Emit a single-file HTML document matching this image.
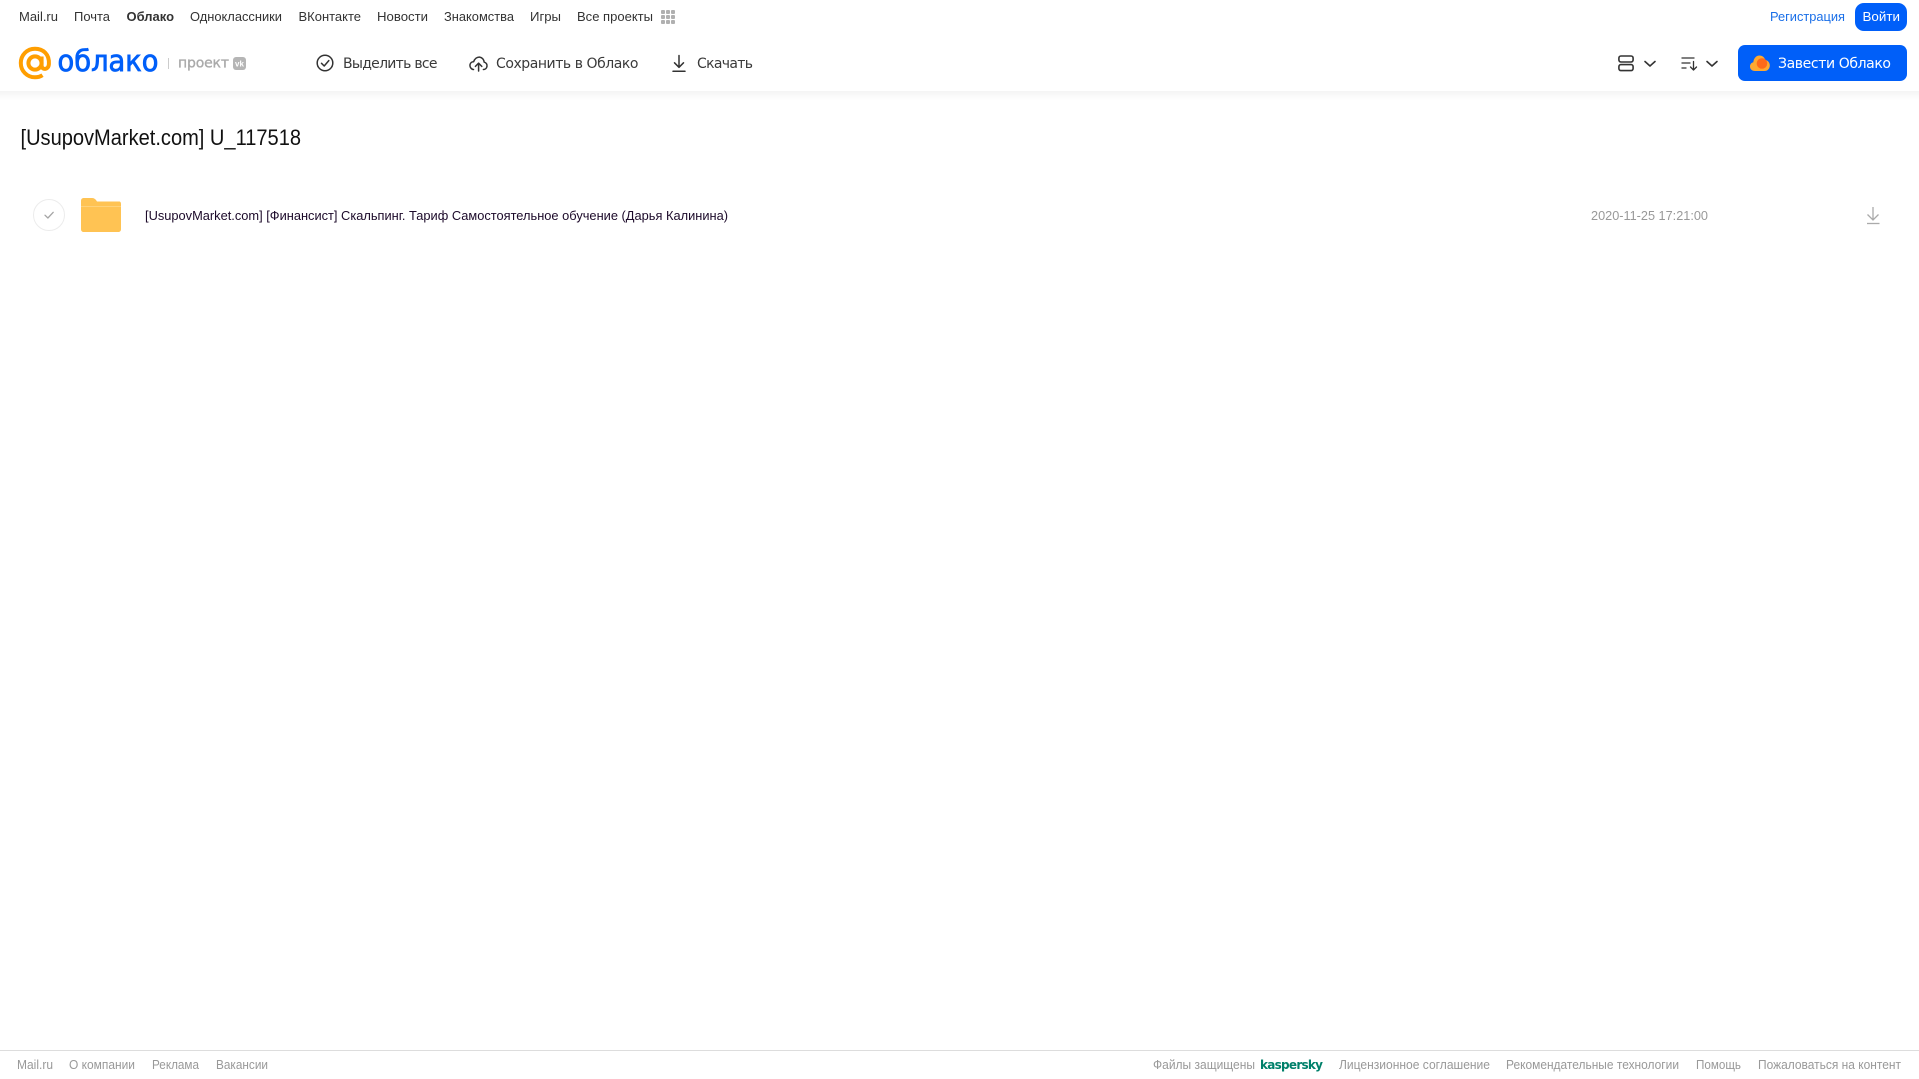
<!DOCTYPE html>
<html lang="ru">
<head>
<meta charset="utf-8">
<title>[UsupovMarket.com] U_117518</title>
<style>
html,body{margin:0;padding:0;width:1919px;height:1079px;overflow:hidden;background:#fff}
svg{display:block}
text{font-family:"Liberation Sans",sans-serif;white-space:pre}
.n{font-size:13px;fill:#333}
.t{font-family:"DejaVu Sans",sans-serif;font-size:14px;fill:#3a3a3a}
.f{font-size:12.5px;fill:#999}
</style>
</head>
<body>
<svg width="1919" height="1079" viewBox="0 0 1919 1079" xmlns="http://www.w3.org/2000/svg">
<defs>
<linearGradient id="sh" x1="0" y1="0" x2="0" y2="1"><stop offset="0" stop-color="#f4f4f4"/><stop offset="1" stop-color="#fff"/></linearGradient>
</defs>
<rect width="1919" height="1079" fill="#fff"/>
<rect x="0" y="91" width="1919" height="9" fill="url(#sh)"/>

<!-- top nav -->
<text class="n" x="19" y="21" textLength="39" lengthAdjust="spacingAndGlyphs">Mail.ru</text>
<text class="n" x="74" y="21" textLength="36" lengthAdjust="spacingAndGlyphs">Почта</text>
<text class="n" x="126.500" y="21" textLength="47.500" lengthAdjust="spacingAndGlyphs" font-weight="700">Облако</text>
<text class="n" x="190" y="21" textLength="92" lengthAdjust="spacingAndGlyphs">Одноклассники</text>
<text class="n" x="298.500" y="21" textLength="62.500" lengthAdjust="spacingAndGlyphs">ВКонтакте</text>
<text class="n" x="377" y="21" textLength="51" lengthAdjust="spacingAndGlyphs">Новости</text>
<text class="n" x="444" y="21" textLength="70" lengthAdjust="spacingAndGlyphs">Знакомства</text>
<text class="n" x="530" y="21" textLength="31" lengthAdjust="spacingAndGlyphs">Игры</text>
<text class="n" x="577" y="21" textLength="76" lengthAdjust="spacingAndGlyphs">Все проекты</text>
<g fill="#b0b0b0">
<rect x="661" y="10" width="4" height="4" rx="1"/><rect x="666" y="10" width="4" height="4" rx="1"/><rect x="671" y="10" width="4" height="4" rx="1"/>
<rect x="661" y="15" width="4" height="4" rx="1"/><rect x="666" y="15" width="4" height="4" rx="1"/><rect x="671" y="15" width="4" height="4" rx="1"/>
<rect x="661" y="20" width="4" height="4" rx="1"/><rect x="666" y="20" width="4" height="4" rx="1"/><rect x="671" y="20" width="4" height="4" rx="1"/>
</g>
<text class="n" x="1770" y="21" textLength="75" lengthAdjust="spacingAndGlyphs" style="fill:#1a6fe8">Регистрация</text>
<rect x="1855" y="3" width="52" height="28" rx="9" fill="#005ff9"/>
<text class="n" x="1862.500" y="21" textLength="37.500" lengthAdjust="spacingAndGlyphs" style="fill:#fff">Войти</text>

<!-- logo -->
<g fill="none" stroke="#ff9e00" stroke-width="4">
<circle cx="35" cy="63" r="6.6"/>
<path d="M41.6 56.5V65.5C41.6 70 48.5 70.5 48.9 64C49.5 54 43 48.7 35 48.7C27 48.7 20.8 55 20.8 63C20.8 71 27 77.3 35 77.3C38 77.3 40.5 76.5 42.5 75.2"/>
</g>
<text x="57.500" y="71" textLength="101" lengthAdjust="spacingAndGlyphs" style="font-family:'DejaVu Sans',sans-serif;font-size:29px;fill:#005ff9;stroke:#005ff9;stroke-width:.8">облако</text>
<rect x="168" y="58" width="1" height="11" fill="#ccc"/>
<text x="178" y="67.500" textLength="51" style="font-family:'DejaVu Sans',sans-serif;font-size:14px;fill:#aaa;stroke:#aaa;stroke-width:.35">проект</text>
<rect x="233" y="57" width="13" height="13" rx="3" fill="#b5b5b5"/>
<text x="235" y="66.500" textLength="9" style="font-size:8px;font-weight:700;fill:#fff">vk</text>

<!-- toolbar -->
<g fill="none" stroke="#333" stroke-width="1.5" stroke-linecap="round" stroke-linejoin="round">
<circle cx="325" cy="63" r="7.8"/>
<path d="M321.5 63.3L324.2 66L328.8 60.6"/>
<path d="M473.5 69.5H473C470.6 68.8 469.6 66.5 470 64.6C470.4 62.8 472 61.6 473.6 61.7C474.6 58.8 477 56.8 479.6 57.1C482.3 57.5 484 59.8 484.2 62.2C486.2 62.6 487.3 64.4 487 66.2C486.7 68 485.3 69.5 483.4 69.5"/>
<path d="M478.6 71V63.4M475.4 66.4L478.6 63.2L481.8 66.4"/>
<path d="M679 55.5V67M674.5 62.8L679 67.3L683.5 62.8M673 71.2H685"/>
</g>
<text class="t" x="343" y="68" textLength="94.500">Выделить все</text>
<text class="t" x="496" y="68" textLength="142.500">Сохранить в Облако</text>
<text class="t" x="697" y="68" textLength="56">Скачать</text>

<!-- right controls -->
<g fill="none" stroke="#333" stroke-width="1.6" stroke-linecap="round" stroke-linejoin="round">
<rect x="1618.9" y="56" width="14.2" height="6" rx="2"/>
<rect x="1618.9" y="64.6" width="14.2" height="6" rx="2"/>
<path d="M1645 61.5L1650 66L1655 61.5"/>
<path d="M1682 58H1694M1682 63H1690M1682 68H1686M1693.5 61.5V69.500M1690.5 67L1693.5 70L1696.5 67" stroke-width="1.3"/>
<path d="M1707 61.5L1712 66L1717 61.5"/>
</g>
<rect x="1738" y="45" width="169" height="36" rx="7" fill="#005ff9"/>
<path d="M1755 71C1751.8 71 1750 69 1750 66.4C1750 64.2 1751.5 62.6 1753.3 62.2C1753.7 58.6 1756 55.5 1759.5 55.5C1762.4 55.5 1764.5 57.3 1765.2 60C1768 60.3 1769.8 62.8 1769.8 65.5C1769.8 68.6 1767.6 71 1764.6 71Z" fill="#ffa930"/>
<circle cx="1762" cy="63.5" r="5.3" fill="#ff6a1a"/>
<text x="1778" y="68" textLength="113" style="font-family:'DejaVu Sans',sans-serif;font-size:14px;fill:#fff">Завести Облако</text>

<!-- title -->
<text x="20.500" y="145" textLength="280.500" lengthAdjust="spacingAndGlyphs" style="font-size:22px;fill:#111">[UsupovMarket.com] U_117518</text>

<!-- row -->
<circle cx="49" cy="215" r="15.5" fill="#fff" stroke="#ececec" stroke-width="1"/>
<path d="M45 215.2L47.9 218L53.2 212.3" fill="none" stroke="#a5a5a5" stroke-width="1.3" stroke-linecap="round" stroke-linejoin="round"/>
<path d="M81 201C81 199 82 198 84 198H92C94 198 95 199 96 200L97 201.500H119C120.5 201.500 121 202.500 121 204V229C121 231 120 232 118 232H84C82 232 81 231 81 229Z" fill="#ffc353"/>
<rect x="81" y="206" width="40" height="1" fill="#ffd27a"/>
<text x="145" y="220" textLength="583" lengthAdjust="spacingAndGlyphs" style="font-size:13px;fill:#1c0a2a">[UsupovMarket.com] [Финансист] Скальпинг. Тариф Самостоятельное обучение (Дарья Калинина)</text>
<text x="1591" y="220" textLength="117" lengthAdjust="spacingAndGlyphs" style="font-size:13px;fill:#999">2020-11-25 17:21:00</text>
<g fill="none" stroke="#aaa" stroke-width="1.3">
<path d="M1873 207V220M1867.500 214.500L1873 220L1878.500 214.500"/>
<path d="M1867 223.500H1879.500"/>
</g>

<!-- footer -->
<rect x="0" y="1050" width="1919" height="1" fill="#ddd"/>
<text class="f" x="17" y="1069" textLength="36" lengthAdjust="spacingAndGlyphs">Mail.ru</text>
<text class="f" x="69" y="1069" textLength="66" lengthAdjust="spacingAndGlyphs">О компании</text>
<text class="f" x="152" y="1069" textLength="47" lengthAdjust="spacingAndGlyphs">Реклама</text>
<text class="f" x="216" y="1069" textLength="52" lengthAdjust="spacingAndGlyphs">Вакансии</text>
<text class="f" x="1153" y="1069" textLength="102" lengthAdjust="spacingAndGlyphs">Файлы защищены</text>
<text x="1260" y="1069" textLength="63" style="font-family:'DejaVu Sans',sans-serif;font-size:12px;font-weight:700;fill:#00806a">kaspersky</text>
<text class="f" x="1339" y="1069" textLength="151" lengthAdjust="spacingAndGlyphs">Лицензионное соглашение</text>
<text class="f" x="1506" y="1069" textLength="173" lengthAdjust="spacingAndGlyphs">Рекомендательные технологии</text>
<text class="f" x="1696" y="1069" textLength="45" lengthAdjust="spacingAndGlyphs">Помощь</text>
<text class="f" x="1758" y="1069" textLength="143" lengthAdjust="spacingAndGlyphs">Пожаловаться на контент</text>
</svg>
</body>
</html>
